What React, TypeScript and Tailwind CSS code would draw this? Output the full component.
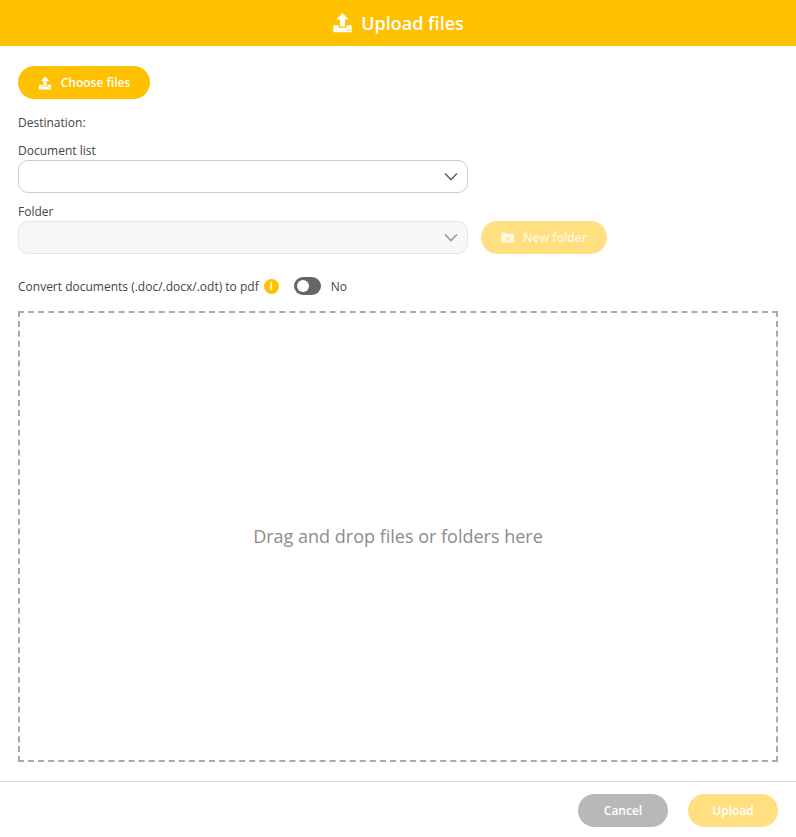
function UploadIcon({ className }: { className?: string }) {
  return (
    <svg viewBox="0 0 24 24" className={className} fill="currentColor">
      <path d="M12 1 19 8.5H14.8V16.5H9.2V8.5H5Z" />
      <path fillRule="evenodd" d="M1.5 15H7.6V18H16.4V15H22.5V23H1.5ZM17 19.6h1.5v1.4H17ZM19.6 19.6h1.5v1.4h-1.5Z" />
    </svg>
  );
}
function Chevron({ className }: { className?: string }) {
  return (
    <svg viewBox="0 0 14 9" className={className} fill="none" stroke="currentColor" strokeWidth="1.6">
      <path d="M1 1.5 7 7.5 13 1.5" />
    </svg>
  );
}
export default function App() {
  return (
    <div className="w-[796px] h-[837px] bg-white flex flex-col font-['Open_Sans',sans-serif] text-[#444] overflow-hidden">
      <div className="h-[46px] shrink-0 bg-[#ffc000] flex items-center justify-center gap-[8px] text-white">
        <UploadIcon className="w-[21px] h-[21px] -mt-[2px]" />
        <span className="text-[18px] font-semibold leading-[24px] -mt-[1px]">Upload files</span>
      </div>
      <div className="flex flex-col flex-1 px-[18px] pt-[20px]">
        <button className="w-[132px] h-[33px] rounded-full bg-[#ffc000] text-white flex items-center justify-center gap-[9px] text-[12px] font-semibold">
          <UploadIcon className="w-[14px] h-[14px]" />
          Choose files
        </button>
        <div className="mt-[15px] text-[12px] leading-[17px] font-medium">Destination:</div>
        <div className="mt-[11px] text-[12px] leading-[17px]">Document list</div>
        <div className="mt-[1px] w-[450px] h-[33px] rounded-[10px] border border-[#ccc] bg-white flex items-center justify-end pr-[9px] text-[#666]">
          <Chevron className="w-[14px] h-[9px]" />
        </div>
        <div className="mt-[10px] text-[12px] leading-[17px]">Folder</div>
        <div className="mt-[1px] flex items-center gap-[13px] h-[33px]">
          <div className="w-[450px] h-[33px] rounded-[10px] border border-[#e6e6e6] bg-[#f7f7f7] flex items-center justify-end pr-[9px] text-[#999]">
            <Chevron className="w-[14px] h-[9px]" />
          </div>
          <button className="w-[126px] h-[33px] rounded-full bg-[#ffdf80] text-[#fff7de] flex items-center justify-center gap-[9px] text-[12px] font-semibold">
            <svg viewBox="0 0 14 12" className="w-[13px] h-[11px]" fill="currentColor">
              <path d="M0 1.5A1 1 0 0 1 1 .5H5L6.5 2H13A1 1 0 0 1 14 3V10.5A1 1 0 0 1 13 11.5H1A1 1 0 0 1 0 10.5Z" />
              <path d="M6.6 5h.8v1.8h1.8v.8H7.4v1.8h-.8V7.6H4.8v-.8h1.8Z" fill="#ffdf80" />
            </svg>
            New folder
          </button>
        </div>
        <div className="mt-[22px] h-[20px] flex items-center text-[12px]">
          <span className="leading-[17px]">Convert documents (.doc/.docx/.odt) to pdf</span>
          <span className="ml-[5px] w-[15px] h-[15px] rounded-full bg-[#ffc000] text-white flex items-center justify-center text-[10px] font-bold leading-none">i</span>
          <span className="ml-[15px] w-[27px] h-[18px] rounded-full bg-[#666] flex items-center pl-[3px]">
            <span className="w-[12px] h-[12px] rounded-full bg-white" />
          </span>
          <span className="ml-[10px] leading-[17px]">No</span>
        </div>
        <div className="mt-[15px] h-[451px] border-2 border-dashed border-[#aaa] flex items-center justify-center text-[18px] text-[#8c8c8c]">
          Drag and drop files or folders here
        </div>
      </div>
      <div className="h-[56px] shrink-0 border-t border-[#ddd] flex items-start justify-end gap-[20px] pt-[12px] pr-[18px] text-[12px] font-semibold text-white">
        <button className="w-[90px] h-[33px] rounded-full bg-[#b8b8b8]">Cancel</button>
        <button className="w-[90px] h-[33px] rounded-full bg-[#ffdf80]">Upload</button>
      </div>
    </div>
  );
}
